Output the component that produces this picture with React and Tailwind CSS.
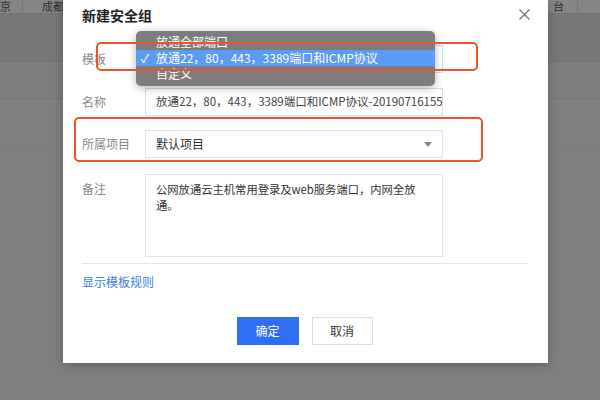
const font = "font-['Noto_Sans_CJK_SC','Noto_Sans',sans-serif]"

const Label = ({ children, top }) => (
  <div className={`w-[63px] shrink-0 text-[12px] leading-[16px] text-[#8a8a8a] ${top ? 'pt-[7px]' : 'flex items-center'}`}>
    {children}
  </div>
)

const App = () => {
  return (
    <div className={`relative h-[400px] w-[600px] overflow-hidden bg-[#7f7f7f] ${font}`}>
      {/* page behind the mask */}
      <div className="flex h-[14px] border-b border-[#727272] bg-[#858585] text-[11px] leading-[12px] text-[#2e2e2e]">
        <div className="w-[23px] overflow-hidden border-r border-[#767676]">京</div>
        <div className="w-[530px] pl-[19px]">成都</div>
        <div className="w-[25px] border-r border-[#767676]">台</div>
      </div>
      <div className="h-[48px] border-b border-[#727272] bg-[#777777]" />
      <div className="h-[37px] border-b border-[#757575] bg-[#7d7d7d]" />
      <div className="h-[52px] border-b border-[#7a7a7a] bg-[#7f7f7f]" />

      {/* dialog */}
      <div className="absolute left-[63px] top-0 h-[363px] w-[485px] bg-white pl-[19px] pr-[20px] shadow-[0_2px_10px_rgba(0,0,0,0.25)]">
        <div className="pt-[6px] text-[14px] font-bold leading-[18px] text-[#222]">新建安全组</div>
        <button className="absolute left-[456px] top-[9px]">
          <svg width="11" height="11" viewBox="0 0 11 11" fill="none" stroke="#7a7a7a" strokeWidth="1.4">
            <path d="M0.5 0.5L10.5 10.5M10.5 0.5L0.5 10.5" />
          </svg>
        </button>

        <div className="mt-[21px] flex h-[28px]">
          <Label>模板</Label>
          <div className="flex h-[28px] w-[298px] items-center border border-[#dcdcdc] px-[10px] text-[12px] text-[#333]">
            放通22，80，443，3389端口和ICMP协议
          </div>
        </div>

        <div className="mt-[15px] flex h-[28px]">
          <Label>名称</Label>
          <div className="flex h-[28px] w-[298px] items-center overflow-hidden whitespace-nowrap border border-[#dcdcdc] pl-[10px] text-[11.5px] text-[#444]">
            放通22，80，443，3389端口和ICMP协议-201907161555
          </div>
        </div>

        <div className="mt-[14px] flex h-[28px]">
          <Label>所属项目</Label>
          <div className="flex h-[28px] w-[298px] items-center justify-between border border-[#e2e2e2] pl-[10px] pr-[10px] text-[12px] text-[#333]">
            <span>默认项目</span>
            <svg width="8" height="5" viewBox="0 0 8 5">
              <path d="M0 0H8L4 5Z" fill="#8a8a8a" />
            </svg>
          </div>
        </div>

        <div className="mt-[16px] flex">
          <Label top>备注</Label>
          <div className="h-[83px] w-[298px] border border-[#e2e2e2] pl-[10px] pt-[6px] text-[11.3px] leading-[16px] text-[#333]">
            公网放通云主机常用登录及web服务端口，内网全放
            <br />
            通。
          </div>
        </div>

        <div className="mt-[6px] h-px bg-[#e6e6e6]" />

        <div className="mt-[10px] text-[12px] leading-[16px] text-[#3b7fe6]">显示模板规则</div>

        <div className="mt-[27px] flex justify-center gap-[13px] pr-[1px]">
          <button className="h-[28px] w-[62px] bg-[#2f6ff6] text-[12px] text-white">确定</button>
          <button className="h-[28px] w-[61px] border border-[#dddddd] bg-white text-[12px] text-[#333]">取消</button>
        </div>
      </div>

      {/* native select menu */}
      <div className="absolute left-[136px] top-[31px] h-[55px] w-[299px] overflow-hidden rounded-[5px] bg-[#7d7d7d] pt-[3px] text-[12px] leading-[16px] text-white shadow-[0_2px_8px_rgba(0,0,0,0.3)]">
        <div className="h-[16px] pl-[20px]">放通全部端口</div>
        <div className="relative h-[16px] bg-[#5b9cf7] pl-[20px]">
          <span className="absolute left-[5px] top-0">✓</span>
          放通22，80，443，3389端口和ICMP协议
        </div>
        <div className="h-[16px] pl-[20px]">自定义</div>
      </div>

      {/* highlight marks */}
      <div className="absolute left-[96px] top-[42px] h-[29px] w-[382px] rounded-[5px] border-2 border-[#e9552d]" />
      <div className="absolute left-[74px] top-[117px] h-[45px] w-[409px] rounded-[5px] border-2 border-[#e9552d]" />
    </div>
  )
}

export default App
